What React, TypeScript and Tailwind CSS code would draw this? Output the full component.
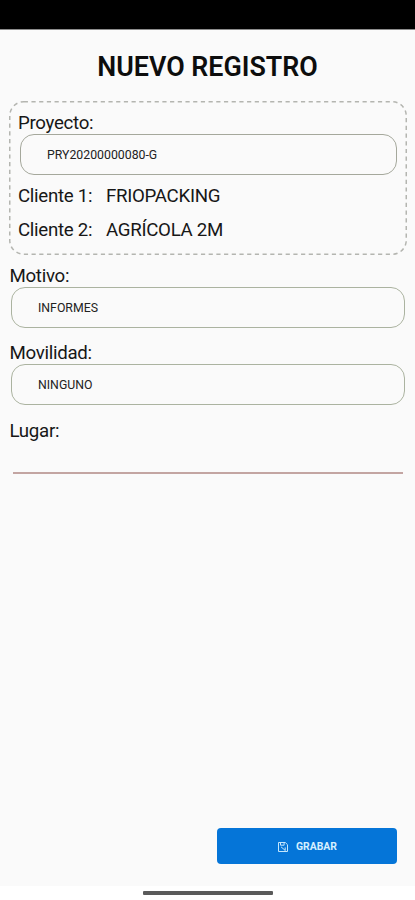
import React from 'react';

const SaveIcon: React.FC = () => (
  <svg className="w-[10px] h-[10px]" viewBox="0 0 10 10" fill="none" stroke="#c4e6fc" strokeWidth="1">
    <path d="M.5.5h6.8l2.2 2.2v6.8h-9z" />
    <path d="M2.5.8v2.4h3.6V.8" />
    <path d="M3 4.8l4.2 3.6M7.2 5.4v3.3" />
  </svg>
);

const SelectBox: React.FC<{ value: string; className?: string }> = ({ value, className = '' }) => (
  <button
    type="button"
    className={`flex items-center w-full h-[41px] pl-[26px] pt-[2px] rounded-[14px] border-[1.5px] text-left text-[12.3px] leading-none text-[#222222] ${className}`}
  >
    {value}
  </button>
);

const App: React.FC = () => {
  return (
    <div className="flex flex-col h-[900px] w-full bg-white font-['Roboto',sans-serif] text-[#171717]">
      {/* Status bar */}
      <div className="h-[30px] shrink-0 bg-black border-b border-[#8c8c8c]" />

      <main className="flex flex-col h-[856px] bg-[#fafafa]">
        <h1 className="mt-[20px] text-center text-[26.8px] leading-[34px] font-semibold text-[#0d0d0d]">
          NUEVO REGISTRO
        </h1>

        {/* Project */}
        <section className="relative mt-[17px] ml-[9px] mr-[8px] h-[154px] pl-[9px] pr-[9px] pt-[10px] text-[18.7px] tracking-[-0.3px]">
          <svg className="absolute inset-0 w-full h-full" fill="none">
            <rect
              x="0.75"
              y="0.75"
              width="396.5"
              height="152.5"
              rx="14"
              stroke="#b4b5b0"
              strokeWidth="1.5"
              strokeDasharray="4.2 3.5"
            />
          </svg>
          <p className="pt-px h-[23px] leading-[23px]">Proyecto:</p>
          <div className="pl-[2px] pr-px tracking-normal">
            <SelectBox value="PRY20200000080-G" className="border-[#a5a89c]" />
          </div>
          <p className="mt-[9px] leading-[24px] flex">
            <span className="w-[88px]">Cliente 1:</span>
            <span>FRIOPACKING</span>
          </p>
          <p className="mt-[10px] leading-[24px] flex">
            <span className="w-[88px]">Cliente 2:</span>
            <span>AGRÍCOLA 2M</span>
          </p>
        </section>

        {/* Details */}
        <section className="mt-[9px] pl-[9px] pr-[10px] text-[18.7px] tracking-[-0.3px]">
          <p className="pl-[0.5px] leading-[24px]">Motivo:</p>
          <div className="-mt-px pl-[2px] tracking-normal">
            <SelectBox value="INFORMES" className="border-[#abb3a0]" />
          </div>
          <p className="mt-[13px] pl-[0.5px] leading-[24px]">Movilidad:</p>
          <div className="-mt-px pl-[2px] tracking-normal">
            <SelectBox value="NINGUNO" className="border-[#abb3a0]" />
          </div>
          <p className="mt-[14px] pl-[0.5px] leading-[24px]">Lugar:</p>
          <div className="ml-[4px] mr-[2px] mt-[29px] h-[2px] bg-[#c3a5a2]" />
        </section>

        <button
          type="button"
          className="mt-auto mb-[22px] mr-[18px] self-end flex items-center justify-center gap-[8px] w-[180px] h-[36px] pt-px pl-px rounded-[4px] bg-[#0575d8] text-[10.4px] font-bold text-[#d5efff]"
        >
          <SaveIcon />
          GRABAR
        </button>
      </main>

      {/* Gesture bar */}
      <div className="mt-[5px] mx-auto h-[4px] w-[130px] rounded-[1px] bg-[#5a5a5a]" />
    </div>
  );
};

export default App;
